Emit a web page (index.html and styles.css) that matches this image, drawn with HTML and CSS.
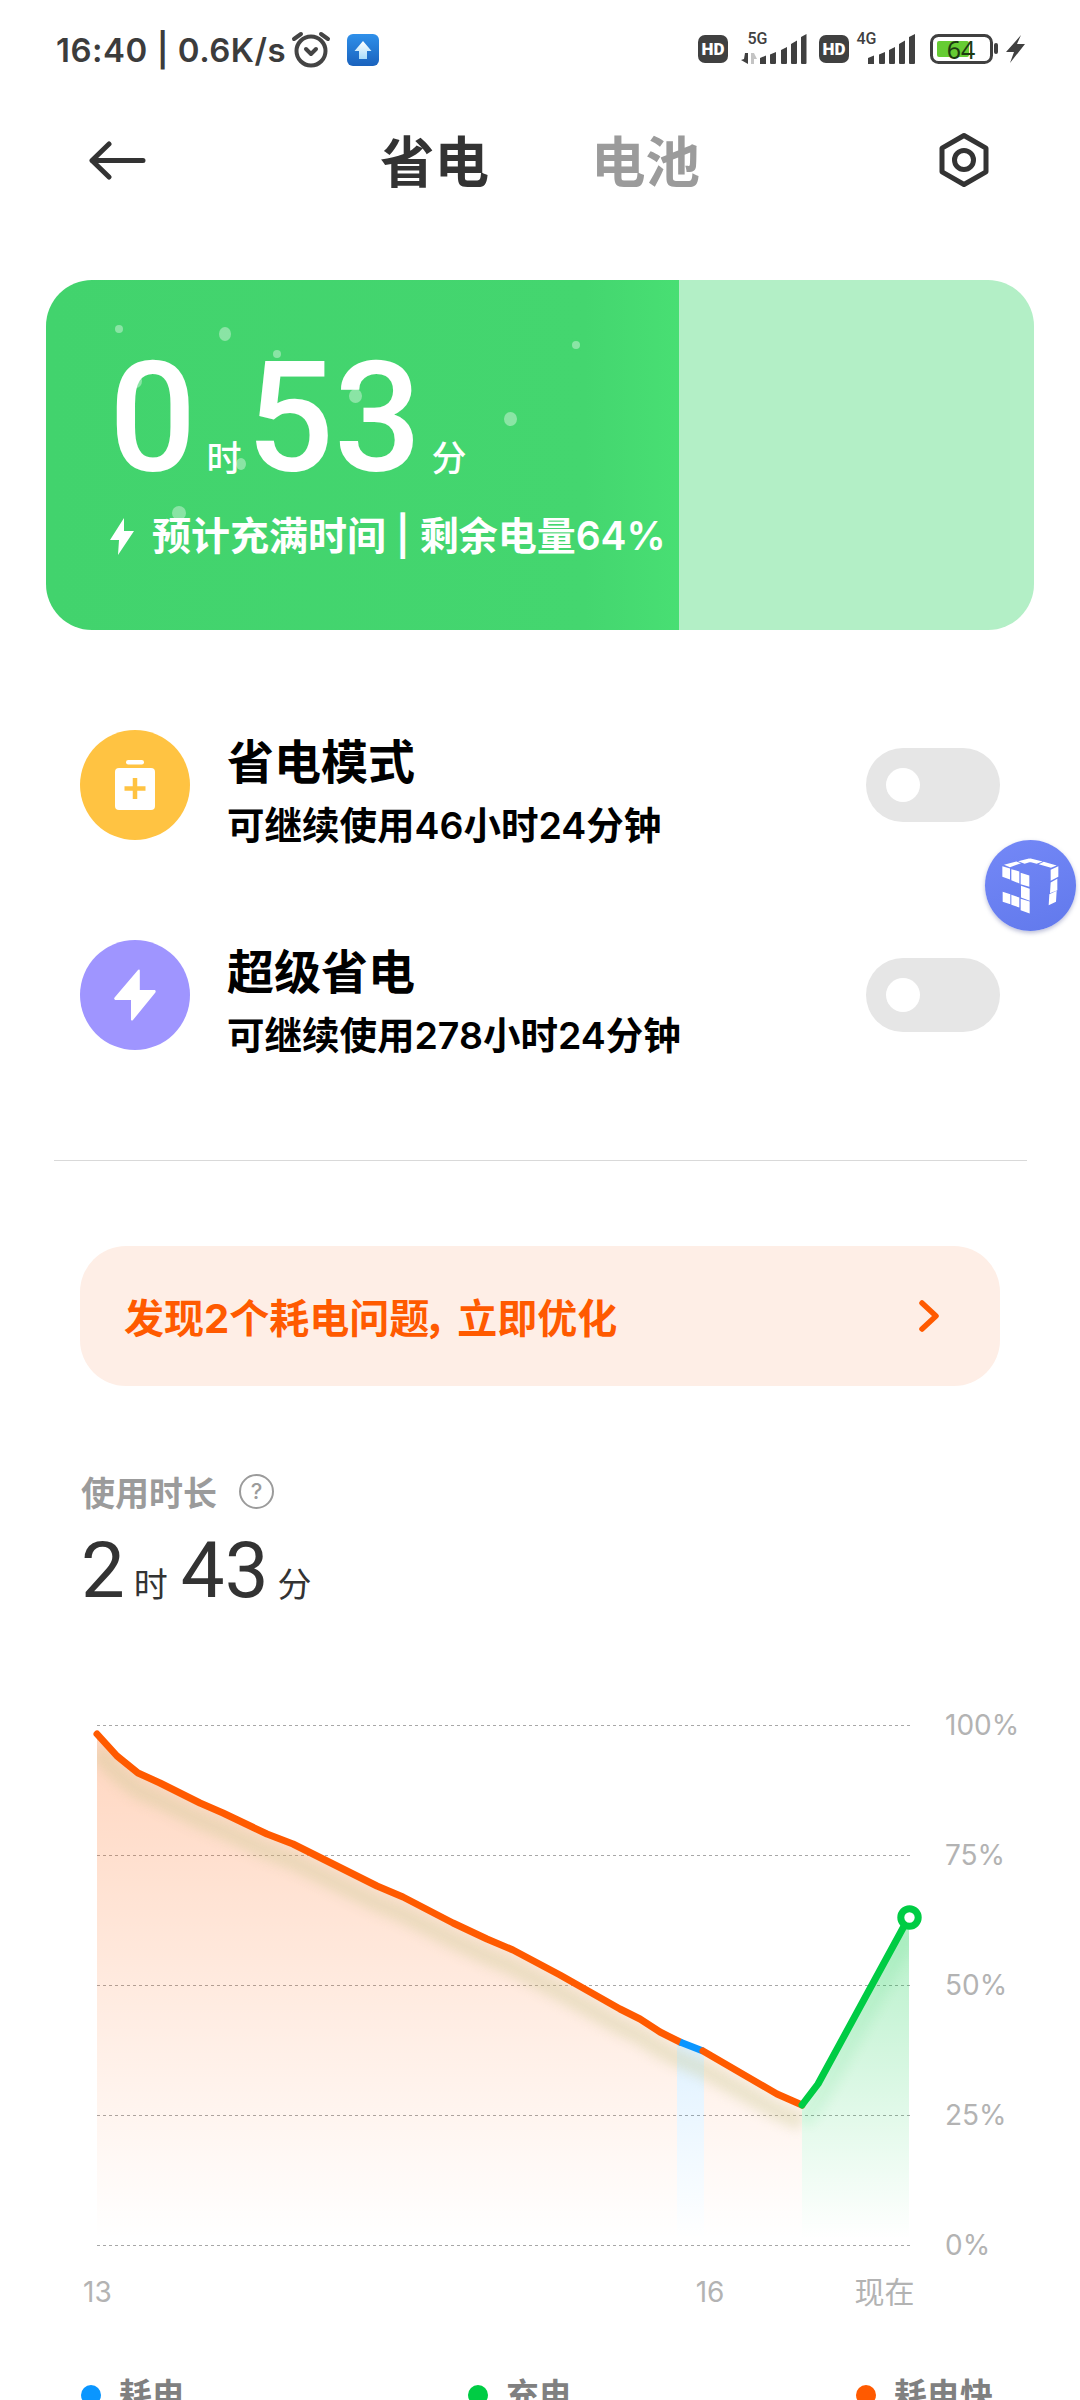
FILE: index.html
```html
<!DOCTYPE html>
<html lang="zh-CN">
<head>
<meta charset="utf-8">
<title>省电</title>
<link rel="stylesheet" href="styles.css">
</head>
<body>
<div class="screen">
  <header class="status">
    <div class="status-left">
      <span class="status-text">16:40 | 0.6K/s</span>
      <svg class="alarm" viewBox="0 0 40 40"><circle cx="20" cy="21" r="14.5"/><path d="M15 19l5 5 5-5"/><path d="M3 9l7-5M37 9l-7-5"/></svg>
      <svg class="upload" viewBox="0 0 32 32"><defs><linearGradient id="ub" x1="0" y1="0" x2="0" y2="1"><stop offset="0" stop-color="#2f90ea"/><stop offset="1" stop-color="#1a62bd"/></linearGradient><linearGradient id="ua" x1="0" y1="0" x2="0" y2="1"><stop offset="0" stop-color="#fff"/><stop offset="1" stop-color="#a9dcfa"/></linearGradient></defs><rect width="32" height="32" rx="6" fill="url(#ub)"/><path d="M16 7l8.500 10h-4.500v8h-8v-8h-4.500z" fill="url(#ua)"/></svg>
    </div>
    <svg class="status-icons" viewBox="698 30 327 40">
      <rect class="ic-fill" x="698" y="35" width="30" height="28" rx="7"/>
      <text class="hd" x="713" y="54.500">HD</text>
      <text class="net" x="757.500" y="44">5G</text>
      <path class="ic-fill" d="M745 53h3v11l-7-4 3-1z"/>
      <path d="M751 53h3l3 6h-3v5h-3z" fill="#c4c4c4"/>
      <path class="ic-fill" d="M760 58l6-2.500v8.500h-6zM770 54.500l6-2.500v11a1 1 0 0 1-1 1h-4a1 1 0 0 1-1-1zM781 50l6-3v16a1 1 0 0 1-1 1h-4a1 1 0 0 1-1-1zM791 44l6-3.500v22.500a1 1 0 0 1-1 1h-4a1 1 0 0 1-1-1zM801 37l5.500-3v29a1 1 0 0 1-1 1h-3.500a1 1 0 0 1-1-1z"/>
      <rect class="ic-fill" x="819" y="35" width="30" height="28" rx="7"/>
      <text class="hd" x="834" y="54.500">HD</text>
      <text class="net" x="866.500" y="44">4G</text>
      <path class="ic-fill" d="M868 58l6-2.500v8.500h-6zM879 54.500l6-2.500v11a1 1 0 0 1-1 1h-4a1 1 0 0 1-1-1zM889 50l6-3v16a1 1 0 0 1-1 1h-4a1 1 0 0 1-1-1zM899 44l6-3.500v22.500a1 1 0 0 1-1 1h-4a1 1 0 0 1-1-1zM909 37l6-3v29a1 1 0 0 1-1 1h-4a1 1 0 0 1-1-1z"/>
      <rect class="bat-shell" x="931.500" y="35.500" width="60" height="27" rx="7"/>
      <rect x="937" y="41" width="32" height="16" rx="2" fill="#66cc33"/>
      <text class="bat-num" x="961" y="59">64</text>
      <rect class="ic-fill" x="994" y="43" width="4" height="11" rx="2"/>
      <path class="ic-fill" d="M1021 35L1006 52h8l-4 11L1025 44h-8z"/>
    </svg>
  </header>

  <nav class="nav">
    <svg class="back" viewBox="0 0 60 40"><path d="M55 19.500H4M21 3L4 19.500 21 36"/></svg>
    <div class="tabs"><span class="tab tab-on">省电</span><span class="tab">电池</span></div>
    <svg class="gear" viewBox="0 0 54 56"><path d="M27 3.500l22 12.700v23.600l-22 12.700-22-12.700V16.200z"/><circle cx="27" cy="28" r="9.500"/></svg>
  </nav>

  <section class="hero">
    <div class="hero-main">
      <i class="bub b1"></i><i class="bub b2"></i><i class="bub b3"></i><i class="bub b4"></i><i class="bub b5"></i><i class="bub b6"></i><i class="bub b7"></i><i class="bub b8"></i><i class="bub b9"></i>
      <div class="hero-time">
        <span class="hero-num">0</span><span class="hero-unit">时</span><span class="hero-num hero-num-b">53</span><span class="hero-unit hero-unit-b">分</span>
      </div>
      <div class="hero-sub">
        <svg class="hero-bolt" viewBox="0 0 24 37"><path d="M14 0L0 22h9l-1 15L24 13h-10z"/></svg>
        <span>预计充满时间 | 剩余电量64%</span>
      </div>
    </div>
    <div class="hero-rest"></div>
  </section>

  <section class="modes">
    <div class="mode">
      <div class="mode-icon mode-yellow">
        <svg viewBox="0 0 40 50"><rect x="11" y="0" width="18" height="4.500" rx="2.200" fill="#fff"/><rect x="0" y="8" width="40" height="42" rx="4" fill="#fff"/><path d="M20 18v21M9.500 28.500h21" stroke="#ffc342" stroke-width="4.500"/></svg>
      </div>
      <div class="mode-text"><h2>省电模式</h2><p>可继续使用46小时24分钟</p></div>
      <div class="toggle"><span class="knob"></span></div>
    </div>
    <div class="mode">
      <div class="mode-icon mode-purple">
        <svg viewBox="0 0 42 52"><path d="M24 1c.6-1 1.800-.6 1.800.6V21h14c1.600 0 2.400 1 1.600 2.400L19 51c-.8 1-2 .6-2-.6V31H2c-1.600 0-2.400-1.400-1.400-2.600z" fill="#fff"/></svg>
      </div>
      <div class="mode-text"><h2>超级省电</h2><p>可继续使用278小时24分钟</p></div>
      <div class="toggle"><span class="knob"></span></div>
    </div>
  </section>

  <hr class="divider">

  <a class="banner">
    <span>发现2个耗电问题<span class="comma">，</span>立即优化</span>
    <svg class="chev" viewBox="0 0 24 32"><path d="M4 3l14 13L4 29"/></svg>
  </a>

  <section class="usage">
    <div class="usage-head"><span>使用时长</span><span class="help">?</span></div>
    <div class="usage-time"><span class="u-num">2</span><span class="u-unit">时</span><span class="u-num">43</span><span class="u-unit">分</span></div>
  </section>

  <section class="chart">
    <div class="chart-top">
      <svg class="plot" viewBox="97 1708 816 556">
        <defs>
          <linearGradient id="go" gradientUnits="userSpaceOnUse" x1="0" y1="1735" x2="0" y2="2240"><stop offset="0" stop-color="#ff5a00" stop-opacity=".25"/><stop offset="1" stop-color="#ff5a00" stop-opacity="0"/></linearGradient>
          <linearGradient id="gb" gradientUnits="userSpaceOnUse" x1="0" y1="2045" x2="0" y2="2240"><stop offset="0" stop-color="#0a96ff" stop-opacity=".13"/><stop offset="1" stop-color="#0a96ff" stop-opacity="0"/></linearGradient>
          <linearGradient id="gg" gradientUnits="userSpaceOnUse" x1="0" y1="1918" x2="0" y2="2240"><stop offset="0" stop-color="#00cc44" stop-opacity=".3"/><stop offset="1" stop-color="#00cc44" stop-opacity="0"/></linearGradient>
          <filter id="soft" x="-10%" y="-10%" width="120%" height="120%"><feGaussianBlur stdDeviation="6"/></filter>
          <clipPath id="clipo"><path d="M97 1735L117 1757 138 1774 160 1784 200 1804 223 1814 267 1835 293 1845 323 1860 377 1887 403 1898 453 1924 487 1940 513 1951 560 1976 620 2010 640 2020 660 2033 680 2043 703 2053 777 2095 802 2106V2240H97z"/></clipPath>
          <clipPath id="clipg"><path d="M802 2106L818 2085 909 1918V2240H802z"/></clipPath>
        </defs>
        <g class="grid">
          <path d="M97 1726.500H913M97 1856.500H913M97 1986.500H913M97 2116.500H913M97 2246.500H913"/>
        </g>
        <path fill="url(#go)" d="M97 1735L117 1757 138 1774 160 1784 200 1804 223 1814 267 1835 293 1845 323 1860 377 1887 403 1898 453 1924 487 1940 513 1951 560 1976 620 2010 640 2020 660 2033 677 2042V2240H97z"/>
        <path fill="url(#gb)" d="M677 2042L680 2043 703 2053 704 2053V2240H677z"/>
        <path fill="url(#go)" d="M704 2053L777 2095 802 2106V2240H704z"/>
        <path fill="url(#gg)" d="M802 2106L818 2085 909 1918V2240H802z"/>
        <g clip-path="url(#clipo)"><path class="band-o" filter="url(#soft)" d="M97 1752L117 1774 138 1791 160 1801 200 1821 223 1831 267 1852 293 1862 323 1877 377 1904 403 1915 453 1941 487 1957 513 1968 560 1993 620 2027 640 2037 660 2050 680 2060 703 2070 777 2112 802 2123"/></g>
        <g clip-path="url(#clipg)"><path class="band-g" filter="url(#soft)" d="M802 2123L818 2102 909 1935"/></g>
        <path class="line line-o" d="M97 1735L117 1757 138 1774 160 1784 200 1804 223 1814 267 1835 293 1845 323 1860 377 1887 403 1898 453 1924 487 1940 513 1951 560 1976 620 2010 640 2020 660 2033 680 2043"/>
        <path class="line line-b" d="M680 2043L703 2052"/>
        <path class="line line-o" d="M703 2052L777 2095 802 2106"/>
        <path class="line line-g" d="M802 2106L818 2085 909 1918"/>
        <circle class="end-dot" cx="909.500" cy="1918.500" r="8.700"/>
      </svg>
      <div class="y-labels"><span>100%</span><span>75%</span><span>50%</span><span>25%</span><span>0%</span></div>
    </div>
    <div class="x-labels"><span class="x13">13</span><span class="x16">16</span><span class="xnow">现在</span></div>
  </section>

  <div class="legend">
    <div class="leg leg-1"><i class="dot dot-b"></i>耗电</div>
    <div class="leg leg-2"><i class="dot dot-g"></i>充电</div>
    <div class="leg leg-3"><i class="dot dot-o"></i>耗电快</div>
  </div>

  <div class="cube">
    <svg viewBox="435 360 273 272"><path fill="#fff" d="M487 438l23 7v33l-23-8zM514 447l24 7v36l-24-10zM542 458l26 8v34l-26-8zM543 497l26 9v36l-26-10zM488 515l23 7v30l-23-7zM514 524l24 8v30l-24-8zM542 536l27 8v36l-27-10zM492 434l37-10 14 5-33 12zM534 423l33-8 20 5-33 11zM572 415l36 9-18 7-34-9zM611 425l39 11-17 7-37-11zM632 449l23-11v32l-23 12zM632 487l20-11v34l-22 9zM628 522l22-10-2 33-22 10z"/></svg>
  </div>
</div>
</body>
</html>
```

FILE: styles.css
```css
* { box-sizing: border-box; }
html, body { margin: 0; padding: 0; background: #fff; }
body { font-family: Inter, "Noto Sans CJK SC", sans-serif; color: #000; }
.screen { position: relative; width: 1080px; height: 2400px; overflow: hidden; background: #fff; }

/* status bar */
.status { height: 100px; display: flex; align-items: center; justify-content: space-between; padding: 0 55px 0 56px; }
.status-left { display: flex; align-items: center; }
.status-text { font-family: Inter, sans-serif; font-size: 33px; letter-spacing: .5px; font-weight: 600; color: #3c3c3c; white-space: pre; line-height: 40px; }
.alarm { width: 40px; height: 40px; margin-left: 5px; fill: none; stroke: #444; stroke-width: 4; stroke-linecap: round; stroke-linejoin: round; }
.upload { width: 32px; height: 32px; margin-left: 16px; }
.status-icons { width: 327px; height: 40px; }
.ic-fill { fill: #404040; }
.hd { font-family: Roboto, sans-serif; font-size: 17px; font-weight: 900; fill: #fff; text-anchor: middle; }
.net { font-family: Roboto, sans-serif; font-size: 16px; font-weight: 500; fill: #404040; text-anchor: middle; }
.bat-shell { fill: none; stroke: #404040; stroke-width: 3; }
.bat-num { font-family: "Noto Sans", sans-serif; font-size: 25px; fill: #1d3b10; text-anchor: middle; }

/* nav */
.nav { height: 120px; display: grid; grid-template-columns: 1fr auto 1fr; align-items: center; padding: 0 90px; }
.back { width: 60px; height: 40px; margin: 1px 0 0 -2px; fill: none; stroke: #333; stroke-width: 5; stroke-linecap: round; stroke-linejoin: round; }
.tabs { display: flex; gap: 102px; margin-top: -2px; }
.tab { font-size: 54.500px; line-height: 60px; font-weight: 700; color: #9b9b9b; font-family: "Noto Sans CJK SC", sans-serif; }
.tab-on { color: #333; }
.gear { width: 54px; height: 56px; justify-self: end; margin-right: -1px; fill: none; stroke: #333; stroke-width: 5; stroke-linejoin: round; }

/* hero */
.hero { margin: 60px 46px 0; height: 350px; border-radius: 46px; overflow: hidden; display: flex; }
.hero-main { position: relative; width: 633px; background: linear-gradient(90deg, #42d36d, #44d66f 85%, #48df73); padding: 66px 0 0 63px; }
.hero-rest { flex: 1; background: #b3efc6; }
.bub { position: absolute; border-radius: 50%; background: rgba(255,255,255,.38); }
.b1 { left: 69px; top: 45px; width: 8px; height: 8px; }
.b2 { left: 173px; top: 47px; width: 12px; height: 14px; }
.b3 { left: 227px; top: 70px; width: 8px; height: 8px; }
.b4 { left: 526px; top: 61px; width: 8px; height: 8px; }
.b5 { left: 84px; top: 94px; width: 12px; height: 14px; }
.b6 { left: 303px; top: 109px; width: 13px; height: 14px; }
.b7 { left: 458px; top: 132px; width: 13px; height: 14px; }
.b8 { left: 190px; top: 178px; width: 10px; height: 12px; }
.b9 { left: 126px; top: 226px; width: 14px; height: 14px; }
.hero-time { position: relative; display: flex; align-items: baseline; height: 145px; color: #fff; }
.hero-num { font-family: Roboto, sans-serif; font-size: 154px; line-height: 145px; font-weight: 500; }
.hero-unit { font-family: "Noto Sans CJK SC", sans-serif; font-size: 35px; font-weight: 500; margin-left: 10px; line-height: 40px; }
.hero-num-b { margin-left: 5px; }
.hero-unit-b { margin-left: 10px; }
.hero-sub { position: relative; display: flex; align-items: center; margin-top: 22px; margin-left: 1px; color: #fff; font-size: 39px; font-weight: 600; line-height: 46px; white-space: nowrap; }
.hero-bolt { width: 24px; height: 37px; fill: #fff; margin-right: 18px; flex: none; }

/* modes */
.modes { margin-top: 50px; }
.mode { height: 210px; display: flex; align-items: center; padding: 0 80px; }
.mode-icon { width: 110px; height: 110px; border-radius: 50%; display: flex; align-items: center; justify-content: center; flex: none; }
.mode-yellow svg { width: 40px; height: 50px; }
.mode-purple svg { width: 42px; height: 52px; }
.mode-yellow { background: #ffc342; }
.mode-purple { background: #9f95ff; }
.mode-text { flex: 1; margin-left: 37px; padding-top: 9px; }
.mode-text h2 { margin: 0; font-family: "Noto Sans CJK SC", sans-serif; font-size: 47px; line-height: 54px; font-weight: 700; color: #000; }
.mode-text p { margin: 18px 0 0; font-size: 37.500px; line-height: 44px; font-weight: 600; color: #000; }
.toggle { width: 134px; height: 74px; border-radius: 37px; background: #e6e6e6; padding: 20px; flex: none; }
.knob { display: block; width: 34px; height: 34px; border-radius: 50%; background: #fff; }

.divider { margin: 60px 53px 0 54px; border: 0; border-top: 1px solid #d9d9d9; height: 0; }

/* banner */
.banner { margin: 85px 80px 0; height: 140px; border-radius: 46px; background: #feeee6; color: #ff5a00; display: flex; align-items: center; justify-content: space-between; padding: 0 58px 0 44px; font-size: 40px; font-weight: 700; }
.comma { font-feature-settings: "palt"; margin-right: 8px; }
.chev { width: 24px; height: 32px; fill: none; stroke: #ff5a00; stroke-width: 5.500; stroke-linecap: round; stroke-linejoin: round; }

/* usage */
.usage { margin: 86px 0 0 81px; }
.usage-head { display: flex; align-items: center; height: 38px; font-size: 34px; font-weight: 700; color: #9b9b9b; }
.help { display: flex; align-items: center; justify-content: center; width: 35px; height: 35px; margin-left: 22px; border: 2.500px solid #9b9b9b; border-radius: 50%; font-size: 22px; font-weight: 500; }
.usage-time { display: flex; align-items: baseline; margin-top: 22px; height: 78px; line-height: 78px; color: #333; }
.u-num { font-family: Roboto, sans-serif; font-size: 78px; font-weight: 400; }
.u-unit { font-family: "Noto Sans CJK SC", sans-serif; font-size: 34px; font-weight: 400; margin: 0 13px 0 9px; }

/* chart */
.chart { margin-top: 97px; }
.chart-top { display: flex; padding-left: 97px; }
.plot { width: 816px; height: 556px; overflow: visible; flex: none; }
.grid path { fill: none; stroke: #a8a8a8; stroke-width: 1; stroke-dasharray: 3 3; }
.band-o { fill: none; stroke: #c8c890; stroke-width: 18; opacity: .35; }
.band-g { fill: none; stroke: #00cc44; stroke-width: 18; opacity: .08; }
.line { fill: none; stroke-width: 7; stroke-linecap: round; stroke-linejoin: round; }
.line-o { stroke: #ff5a00; }
.line-b { stroke: #0a96ff; stroke-linecap: butt; }
.line-g { stroke: #00cc44; }
.end-dot { fill: #fff; stroke: #00cc44; stroke-width: 7; }
.y-labels { display: flex; flex-direction: column; justify-content: space-between; height: 556px; margin-left: 32px; }
.y-labels span { font-size: 28px; line-height: 36px; color: #b3b3b3; }
.x-labels { position: relative; height: 40px; font-size: 28px; line-height: 40px; color: #b3b3b3; margin-top: 9px; display: flex; }
.x13 { margin-left: 83px; }
.x16 { margin-left: 584px; }
.xnow { margin-left: 130px; font-size: 30px; }

/* legend */
.legend { display: flex; margin-top: 63px; padding-left: 81px; font-size: 33px; font-weight: 700; color: #808080; line-height: 40px; }
.leg { display: flex; align-items: center; gap: 18px; }
.leg-1 { width: 387px; }
.leg-2 { width: 388px; }
.dot { width: 20px; height: 20px; border-radius: 50%; }
.dot-b { background: #0a96ff; }
.dot-g { background: #00cc44; }
.dot-o { background: #ff5a00; }

/* floating cube */
.cube { position: absolute; left: 985px; top: 840px; width: 91px; height: 91px; border-radius: 50%; background: linear-gradient(160deg, #7488f7, #6179ec); box-shadow: 0 2px 4px rgba(60,70,140,.35); }
.cube svg { display: block; width: 91px; height: 91px; }
```
